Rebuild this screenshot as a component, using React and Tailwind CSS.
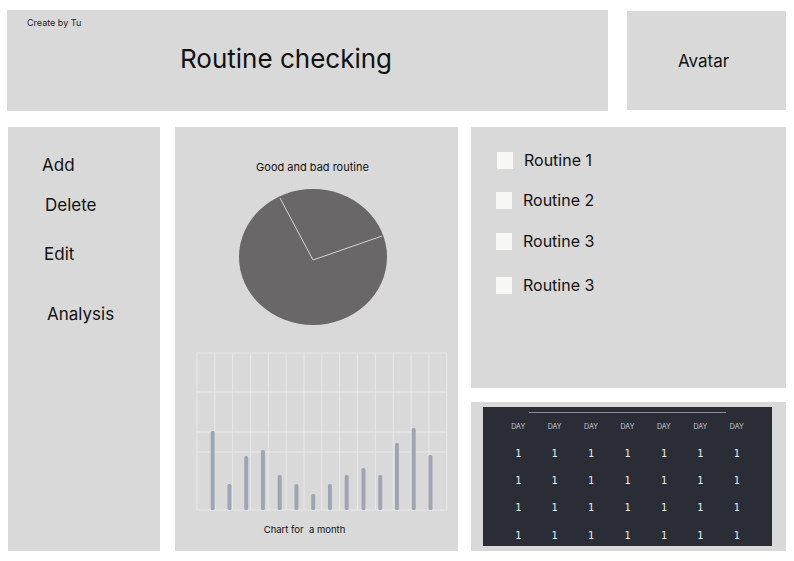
import React from "react";

const bars = [79, 26, 54, 60, 35, 26, 16, 26, 35, 42, 35, 67, 82, 55];

function Pie() {
  return (
    <svg width="150" height="138" viewBox="0 0 150 138" className="block">
      <ellipse cx="74" cy="68" rx="74" ry="68" fill="#696767" />
      <polyline points="41,9 74,71 143,47" fill="none" stroke="#d4d4d4" strokeWidth="1" />
    </svg>
  );
}

function Chart() {
  const v = [];
  for (let i = 0; i <= 14; i++) v.push(1 + i * 17.84);
  const h = [1, 40, 80, 100, 158];
  return (
    <svg width="252" height="160" viewBox="0 0 252 160" className="block">
      {v.map((x, i) => (
        <line key={"v" + i} x1={x} y1="1" x2={x} y2="158" stroke="#e8e8e8" strokeWidth="1" />
      ))}
      {h.map((y, i) => (
        <line key={"h" + i} x1="1" y1={y} x2="250.8" y2={y} stroke="#e8e8e8" strokeWidth="1" />
      ))}
      {bars.map((b, i) => {
        const cx = 16.7 + i * 16.75;
        return <rect key={"b" + i} x={cx - 2} y={158 - b} width="4" height={b} rx="1.5" fill="#9ea6b4" />;
      })}
    </svg>
  );
}

export default function App() {
  const font = { fontFamily: "Inter, 'Noto Sans', sans-serif" };
  const cols = [0, 1, 2, 3, 4, 5, 6];
  return (
    <div className="w-[794px] h-[561px] bg-white overflow-hidden text-black" style={font}>
      {/* Header row */}
      <div className="flex pt-[10px]">
        <div className="ml-[7px] w-[601px] h-[101px] bg-[#d9d9d9]">
          <div className="pl-[20px] pt-[7px] text-[9px] leading-[11px] text-[#222]">Create by Tu</div>
          <div className="pl-[173px] mt-[15px] text-[26px] leading-[32px] text-[#111]">Routine checking</div>
        </div>
        <div className="ml-[19px] mt-[1px] w-[159px] h-[99px] bg-[#d9d9d9] flex items-center justify-center pr-[6px]">
          <span className="text-[17px] leading-[20px] text-[#111]">Avatar</span>
        </div>
      </div>

      {/* Body row */}
      <div className="flex mt-[16px]">
        {/* Sidebar */}
        <div className="ml-[8px] w-[152px] h-[424px] bg-[#d9d9d9] text-[17px] leading-[20px] text-[#111]">
          <div className="pl-[34px] pt-[28px]">Add</div>
          <div className="pl-[37px] mt-[20px]">Delete</div>
          <div className="pl-[36px] mt-[29px]">Edit</div>
          <div className="pl-[39px] mt-[40px]">Analysis</div>
        </div>

        {/* Middle */}
        <div className="ml-[15px] w-[283px] h-[424px] bg-[#d9d9d9]">
          <div className="pt-[33px] pr-[8px] text-center text-[11px] leading-[14px] text-[#111]">Good and bad routine</div>
          <div className="ml-[64px] mt-[15px]">
            <Pie />
          </div>
          <div className="ml-[21px] mt-[25px]">
            <Chart />
          </div>
          <div className="mt-[12px] pr-[24px] text-center text-[9.5px] leading-[12px] text-[#111]">Chart for&nbsp; a month</div>
        </div>

        {/* Right column */}
        <div className="ml-[13px] w-[315px] flex flex-col gap-[14px]">
          <div className="h-[261px] bg-[#d9d9d9] text-[16px] leading-[20px] text-[#111]">
            <div className="flex items-center gap-[11px] pl-[26px] pt-[23px]">
              <div className="w-[16px] h-[17px] bg-[#f7f7f5]" />
              <span>Routine 1</span>
            </div>
            <div className="flex items-center gap-[11px] pl-[25px] mt-[20px]">
              <div className="w-[16px] h-[17px] bg-[#f7f7f5]" />
              <span>Routine 2</span>
            </div>
            <div className="flex items-center gap-[11px] pl-[25px] mt-[21px]">
              <div className="w-[16px] h-[17px] bg-[#f7f7f5]" />
              <span>Routine 3</span>
            </div>
            <div className="flex items-center gap-[11px] pl-[25px] mt-[24px]">
              <div className="w-[16px] h-[17px] bg-[#f7f7f5]" />
              <span>Routine 3</span>
            </div>
          </div>
          <div className="h-[149px] bg-[#d9d9d9] pt-[5px] pl-[12px]">
            <div className="w-[289px] h-[139px] bg-[#2a2d36] pt-[5px]">
              <div className="ml-[46px] w-[197px] h-px bg-[#8a8e96]" />
              <div className="grid grid-cols-7 px-[17px] mt-[9px]">
                {cols.map((c) => (
                  <div key={c} className="text-center text-[7px] leading-[10px] text-[#c9ccd2]">DAY</div>
                ))}
              </div>
              <div className="mt-[8px]">
                {[0, 1, 2, 3].map((r) => (
                  <div key={r} className="grid grid-cols-7 px-[17px] h-[27.3px] items-center">
                    {cols.map((c) => (
                      <div key={c} className="text-center text-[10px] leading-[12px] text-[#eef0f3] font-['DejaVu_Sans_Mono',monospace]">1</div>
                    ))}
                  </div>
                ))}
              </div>
            </div>
          </div>
        </div>
      </div>
    </div>
  );
}
